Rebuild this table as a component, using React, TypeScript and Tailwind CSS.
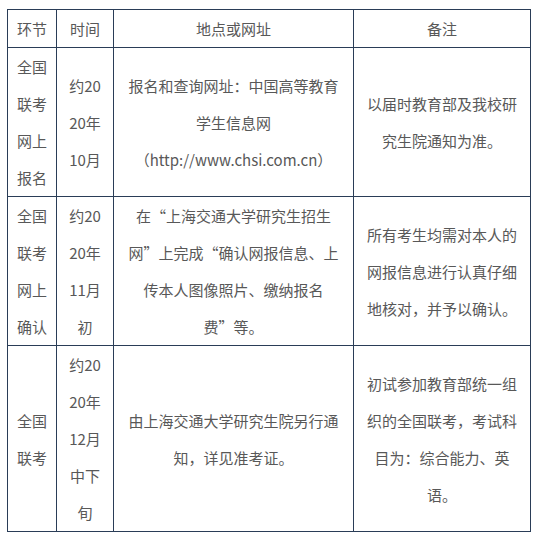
import React from "react";

const B = "border border-[#2a3d57]";

function Lines({ lines }: { lines: string[] }) {
  return (
    <>
      {lines.map((l, i) => (
        <div key={i} className="whitespace-nowrap">
          {l}
        </div>
      ))}
    </>
  );
}

const rows: string[][][] = [
  [
    ["全国", "联考", "网上", "报名"],
    ["约20", "20年", "10月"],
    ["报名和查询网址：中国高等教育", "学生信息网", "（http://www.chsi.com.cn）"],
    ["以届时教育部及我校研", "究生院通知为准。"],
  ],
  [
    ["全国", "联考", "网上", "确认"],
    ["约20", "20年", "11月", "初"],
    ["在“上海交通大学研究生招生", "网”上完成“确认网报信息、上", "传本人图像照片、缴纳报名", "费”等。"],
    ["所有考生均需对本人的", "网报信息进行认真仔细", "地核对，并予以确认。"],
  ],
  [
    ["全国", "联考"],
    ["约20", "20年", "12月", "中下", "旬"],
    ["由上海交通大学研究生院另行通", "知，详见准考证。"],
    ["初试参加教育部统一组", "织的全国联考，考试科", "目为：综合能力、英", "语。"],
  ],
];

export default function App() {
  return (
    <div
      className="bg-white w-[537px] h-[539px] pt-[9px] pl-[7px]"
      style={{ fontFamily: '"Noto Sans CJK SC", "Noto Sans", sans-serif' }}
    >
      <table className="border-collapse table-fixed w-[523px] text-[15px] leading-[37px] text-[#585858]">
        <colgroup>
          <col className="w-[49px]" />
          <col className="w-[57px]" />
          <col className="w-[240px]" />
          <col className="w-[177px]" />
        </colgroup>
        <thead>
          <tr>
            {["环节", "时间", "地点或网址", "备注"].map((h) => (
              <td key={h} className={`${B} text-center p-0 font-normal`}>
                {h}
              </td>
            ))}
          </tr>
        </thead>
        <tbody>
          {rows.map((r, i) => (
            <tr key={i}>
              {r.map((c, j) => (
                <td key={j} className={`${B} text-center align-middle p-0`}>
                  <Lines lines={c} />
                </td>
              ))}
            </tr>
          ))}
        </tbody>
      </table>
    </div>
  );
}
